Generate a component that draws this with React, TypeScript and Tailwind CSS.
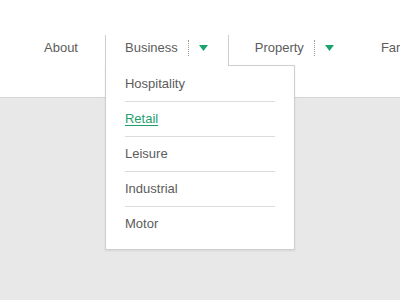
import React from 'react'

const navItems = [
    { label: "About", hasMenu: false },
    { label: "Business", hasMenu: true, open: true },
    { label: "Property", hasMenu: true },
    { label: "Farm", hasMenu: false },
];

const businessLinks = ["Hospitality", "Retail", "Leisure", "Industrial", "Motor"];

function Caret() {
    return (
        <svg width="9" height="6" viewBox="0 0 9 6" className="block">
            <polygon points="0,0 9,0 4.5,6" fill="#1aa36f" />
        </svg>
    );
}

function Dropdown() {
    return (
        <div className="absolute top-[30px] left-0 w-[190px] bg-white border border-[#cfcfcf] pt-px pb-2 px-[19px] shadow-[0_1px_2px_rgba(0,0,0,0.08)]">
            <ul>
                {businessLinks.map((link, index) => (
                    <li
                        key={link}
                        className={index < businessLinks.length - 1 ? "pt-[9px] pb-[9px] border-b border-[#dcdcdc]" : "pt-[9px] pb-[9px]"}
                    >
                        <a
                            href="#"
                            className={link === "Retail" ? "block leading-4 text-[#1f9f6e] underline underline-offset-2" : "block leading-4 text-[#5c5c5c]"}
                        >
                            {link}
                        </a>
                    </li>
                ))}
            </ul>
        </div>
    );
}

export default function App() {
    return (
        <div className="min-h-[300px] overflow-hidden bg-[#e8e8e8] text-[13px] font-['Liberation_Sans',Arial,sans-serif]">
            <header className="h-[98px] bg-white border-b border-[#d6d6d6]">
                <nav className="flex gap-[6px] pl-6 pt-[35px] whitespace-nowrap">
                    {navItems.map(item => (
                        <div key={item.label} className="relative shrink-0">
                            <div
                                className={
                                    item.open
                                        ? "relative z-10 flex items-start h-[31px] pl-[19px] pr-5 pt-[5px] bg-white border-l border-r border-[#cfcfcf]"
                                        : "relative flex items-start h-[31px] pl-[19px] pr-5 pt-[5px] border-l border-r border-transparent"
                                }
                            >
                                <span className="leading-4 text-[#5c5c5c]">{item.label}</span>
                                {item.hasMenu && (
                                    <>
                                        <span className="ml-[10px] h-4 border-l border-dotted border-[#9a9a9a]" />
                                        <span className="ml-[10px] h-4 flex items-center">
                                            <Caret />
                                        </span>
                                    </>
                                )}
                            </div>
                            {item.open && <Dropdown />}
                        </div>
                    ))}
                </nav>
            </header>
        </div>
    );
}
